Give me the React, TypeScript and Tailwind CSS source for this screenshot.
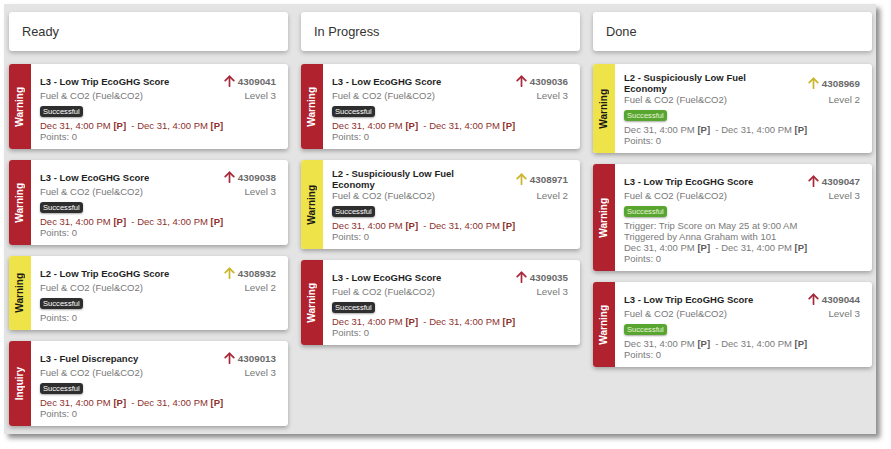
import React from "react";

type Card = {
  kind: "Warning" | "Inquiry";
  level: 2 | 3;
  title: string;
  id: string;
  done?: boolean;
  noDate?: boolean;
  trigger?: string[];
};

const columns: { name: string; cards: Card[] }[] = [
  {
    name: "Ready",
    cards: [
      { kind: "Warning", level: 3, title: "L3 - Low Trip EcoGHG Score", id: "4309041" },
      { kind: "Warning", level: 3, title: "L3 - Low EcoGHG Score", id: "4309038" },
      { kind: "Warning", level: 2, title: "L2 - Low Trip EcoGHG Score", id: "4308932", noDate: true },
      { kind: "Inquiry", level: 3, title: "L3 - Fuel Discrepancy", id: "4309013" },
    ],
  },
  {
    name: "In Progress",
    cards: [
      { kind: "Warning", level: 3, title: "L3 - Low EcoGHG Score", id: "4309036" },
      { kind: "Warning", level: 2, title: "L2 - Suspiciously Low Fuel Economy", id: "4308971" },
      { kind: "Warning", level: 3, title: "L3 - Low EcoGHG Score", id: "4309035" },
    ],
  },
  {
    name: "Done",
    cards: [
      { kind: "Warning", level: 2, title: "L2 - Suspiciously Low Fuel Economy", id: "4308969", done: true },
      {
        kind: "Warning",
        level: 3,
        title: "L3 - Low Trip EcoGHG Score",
        id: "4309047",
        done: true,
        trigger: ["Trigger: Trip Score on May 25 at 9:00 AM", "Triggered by Anna Graham with 101"],
      },
      { kind: "Warning", level: 3, title: "L3 - Low Trip EcoGHG Score", id: "4309044", done: true },
    ],
  },
];

function Arrow({ color }: { color: string }) {
  return (
    <svg width="11" height="12" viewBox="0 0 11 12" fill="none" stroke={color} strokeWidth="1.7" strokeLinecap="round" strokeLinejoin="round">
      <path d="M5.5 11.2V1.4" />
      <path d="M1.2 5.6L5.5 1.3L9.8 5.6" />
    </svg>
  );
}

function TaskCard({ card }: { card: Card }) {
  const yellow = card.level === 2;
  return (
    <div className="flex rounded-[3px] bg-white shadow-[0_2px_4px_rgba(0,0,0,0.3)] overflow-hidden">
      {/* side strip */}
      <div
        className={`w-[22px] shrink-0 flex items-center justify-center ${
          yellow ? "bg-[#eee449] text-[#1a1a1a]" : "bg-[#b0222d] text-white"
        }`}
      >
        <span className="[writing-mode:vertical-rl] rotate-180 text-[10px] font-bold leading-none">{card.kind}</span>
      </div>

      <div className="flex-1 pl-[9px] pr-[12px] pt-[8px] pb-[7px] text-[9.5px] leading-[11px]">
        <div className="flex items-center justify-between min-h-[18px]">
          <div className="w-[150px] font-bold text-[#1f1f1f] leading-[11px]">{card.title}</div>
          <div className="flex items-center gap-[3px] font-bold text-[#6a6a6a] text-[9.8px]">
            <Arrow color={yellow ? "#c9b526" : "#a6283a"} />
            <span>{card.id}</span>
          </div>
        </div>
        <div className="flex justify-between text-[#787878] leading-[12px]">
          <span>Fuel &amp; CO2 (Fuel&amp;CO2)</span>
          <span className="text-[9.8px]">Level {card.level}</span>
        </div>
        <div className="mt-[4px] flex">
          <span
            className={`rounded-[3px] px-[3px] h-[11px] flex items-center text-[7.6px] leading-none shadow-[0_1px_2px_rgba(0,0,0,0.35)] ${
              card.done ? "bg-[#58a62f] text-[#e8f5dc]" : "bg-[#2e2e2e] text-white"
            }`}
          >
            Successful
          </span>
        </div>
        <div className="mt-[3px]">
          {card.trigger?.map((t) => (
            <div key={t} className="text-[#7a7a7a]">
              {t}
            </div>
          ))}
          {!card.noDate && (
            <div className={card.done ? "text-[#7a7a7a]" : "text-[#8e2f2c]"}>
              Dec 31, 4:00 PM <b className={card.done ? "text-[#5a5a5a]" : ""}>[P]</b>&nbsp; - Dec 31, 4:00 PM{" "}
              <b className={card.done ? "text-[#5a5a5a]" : ""}>[P]</b>
            </div>
          )}
          <div className="text-[#7a7a7a]">Points: 0</div>
        </div>
      </div>
    </div>
  );
}

export default function App() {
  return (
    <div className="w-[891px] h-[449px] bg-white overflow-hidden font-['Liberation_Sans',Arial,sans-serif]">
      <div className="ml-[4px] mt-[4px] w-[872px] h-[430px] bg-[#e4e4e4] shadow-[4px_4px_5px_rgba(0,0,0,0.45)] flex gap-[13px] pl-[5px] pt-[8px]">
        {columns.map((col) => (
          <div key={col.name} className="w-[279px] flex flex-col">
            <div className="h-[39px] rounded-[3px] bg-white shadow-[0_2px_4px_rgba(0,0,0,0.25)] flex items-center px-[13px] text-[12.8px] text-[#333]">
              {col.name}
            </div>
            <div className="mt-[13px] flex flex-col gap-[11px]">
              {col.cards.map((c) => (
                <TaskCard key={c.id} card={c} />
              ))}
            </div>
          </div>
        ))}
      </div>
    </div>
  );
}
